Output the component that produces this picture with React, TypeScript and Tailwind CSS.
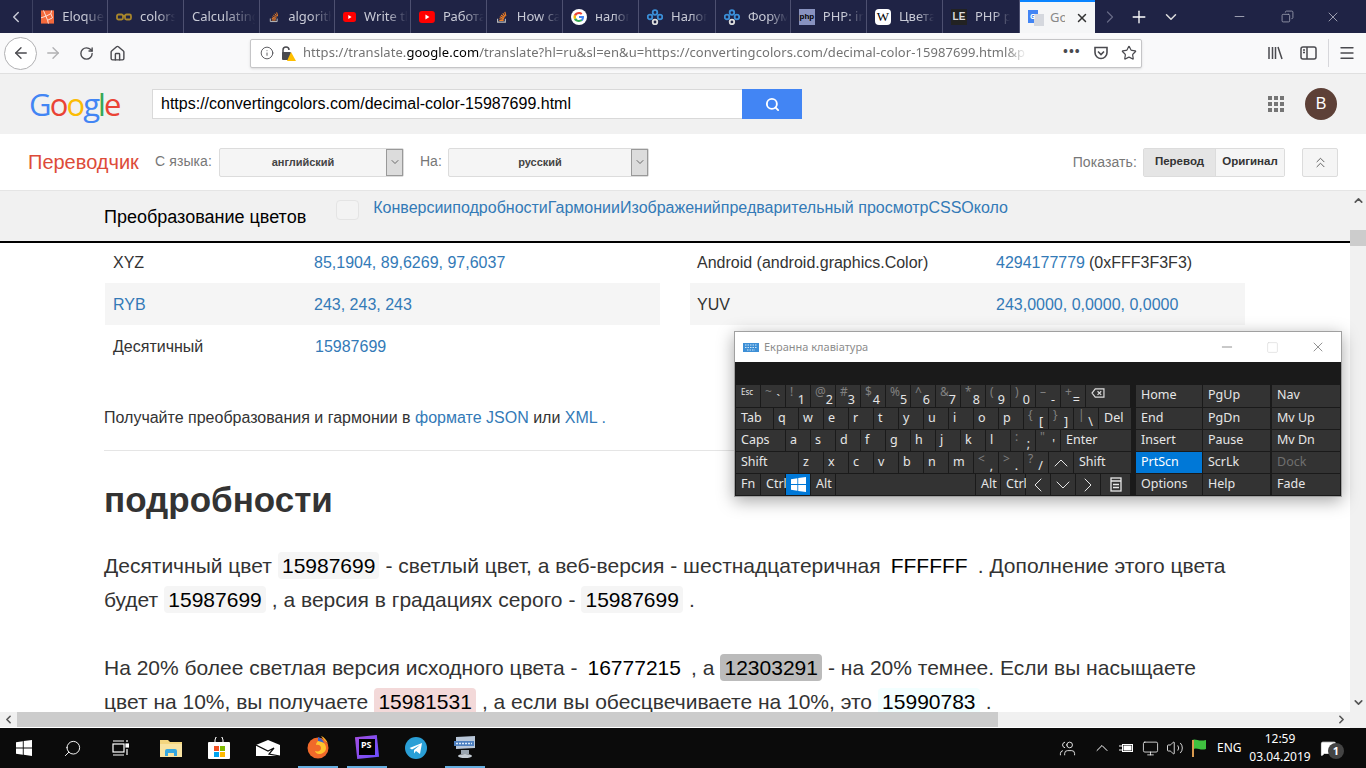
import { Home, RotateCw, ArrowLeft, ArrowRight, Info, Star, Search, X, Minus, Plus, ChevronLeft, ChevronRight, ChevronDown, ChevronUp, ChevronsUp, Square, Copy, Menu, Users, Volume2, Monitor, MessageSquare } from "lucide-react";

const sans = "font-['Liberation_Sans',Arial,sans-serif]";
const ui = "font-['Noto_Sans','Open_Sans',sans-serif]";

function SoIcon() {
  return (
    <svg width="16" height="16" viewBox="0 0 16 16" fill="none">
      <path d="M3 10v4h9v-4" stroke="#bbb" strokeWidth="1.3" />
      <path d="M5 12h5M5 10l5 .8M5.6 7.8l4.8 2M7 5.6l4 3M9 3.6l2.8 4M11.4 2l1.2 4.6" stroke="#f48024" strokeWidth="1.3" />
    </svg>
  );
}

function YtIcon() {
  return (
    <svg width="16" height="16" viewBox="0 0 16 16">
      <rect x="0" y="2" width="16" height="12" rx="3" fill="#f00" />
      <path d="M6.5 5.5v5l4-2.5z" fill="#fff" />
    </svg>
  );
}

function GoogleG({ size = 16 }: { size?: number }) {
  return (
    <svg width={size} height={size} viewBox="0 0 16 16">
      <circle cx="8" cy="8" r="8" fill="#fff" />
      <path d="M13 8.2c0-.4 0-.8-.1-1.100H8v2h2.800c-.1.700-.5 1.200-1 1.600l1.600 1.200c1-.9 1.600-2.200 1.600-3.700z" fill="#4285f4" />
      <path d="M8 13c1.400 0 2.500-.5 3.400-1.200l-1.600-1.200c-.5.300-1.100.5-1.800.5-1.300 0-2.500-.9-2.900-2.100L3 10.200C3.800 11.900 5.800 13 8 13z" fill="#34a853" />
      <path d="M5.100 9c-.2-.7-.2-1.300 0-2L3 5.800c-.7 1.400-.7 3 0 4.400z" fill="#fbbc05" />
      <path d="M8 5c.8 0 1.400.3 2 .8l1.400-1.400C10.500 3.500 9.400 3 8 3 5.800 3 3.800 4.100 3 5.800L5.100 7C5.500 5.900 6.700 5 8 5z" fill="#ea4335" />
    </svg>
  );
}

function NodesIcon() {
  return (
    <svg width="16" height="16" viewBox="0 0 16 16" fill="none" stroke="#3b8fd8" strokeWidth="1.800">
      <circle cx="8" cy="3.500" r="2.300" />
      <circle cx="3" cy="8" r="2.300" />
      <circle cx="13" cy="8" r="2.300" />
      <circle cx="8" cy="13" r="2.300" stroke="#ddd" />
    </svg>
  );
}

function Favicon({ kind }: { kind: string }) {
  if (kind === "so") return <SoIcon />;
  if (kind === "yt") return <YtIcon />;
  if (kind === "g") return <GoogleG />;
  if (kind === "nodes") return <NodesIcon />;
  if (kind === "eloquent")
    return (
      <svg width="16" height="16" viewBox="0 0 16 16">
        <rect width="16" height="16" fill="#f4693c" />
        <path d="M3 0l3 7-6 2M6 7l6-3 2 5-6 3zM12 4l1-4M8 12l1 4" stroke="#fde3d8" strokeWidth="1.200" fill="none" />
      </svg>
    );
  if (kind === "glasses")
    return (
      <svg width="16" height="16" viewBox="0 0 16 16" fill="none" stroke="#a8862c" strokeWidth="1.800">
        <rect x="1" y="5.500" width="6" height="5" rx="1.500" />
        <rect x="9" y="5.500" width="6" height="5" rx="1.500" />
        <path d="M7 7h2" />
      </svg>
    );
  if (kind === "php")
    return (
      <div className={`w-4 h-4 bg-[#8892bf] text-[8px] leading-4 text-center text-black font-bold ${sans}`}>php</div>
    );
  if (kind === "wiki")
    return <div className="w-4 h-4 rounded-sm bg-white text-[13px] leading-4 text-center text-black font-['Liberation_Serif',serif]">W</div>;
  if (kind === "lb")
    return <div className={`w-4 h-4 bg-[#222] text-[10px] leading-4 text-center text-[#ddd] font-bold ${sans}`}>LE</div>;
  return null;
}

const tabs = [
  { icon: "eloquent", label: "Eloquent", w: "w-[75px]" },
  { icon: "glasses", label: "colors", w: "w-[76px]" },
  { icon: "", label: "Calculating", w: "w-[76px]" },
  { icon: "so", label: "algorithm", w: "w-[75px]" },
  { icon: "yt", label: "Write the", w: "w-[76px]" },
  { icon: "yt", label: "Работа", w: "w-[76px]" },
  { icon: "so", label: "How can", w: "w-[76px]" },
  { icon: "g", label: "налог", w: "w-[76px]" },
  { icon: "nodes", label: "Налог", w: "w-[77px]" },
  { icon: "nodes", label: "Форум", w: "w-[75px]" },
  { icon: "php", label: "PHP: in", w: "w-[76px]" },
  { icon: "wiki", label: "Цвета", w: "w-[76px]" },
  { icon: "lb", label: "PHP p", w: "w-[77px]" },
];

function TabBar() {
  return (
    <div className={`h-[33px] shrink-0 bg-[#1f2345] flex items-stretch text-[13px] text-[#c8cad6] ${ui}`}>
      <div className="w-[33px] shrink-0 flex items-center justify-center border-r border-[#3d4161]">
        <ChevronLeft size={18} strokeWidth={2} className="text-[#c8cad6]" />
      </div>
      {tabs.map((t, i) => (
        <div key={i} className={`${t.w} shrink-0 flex items-center gap-[8px] pl-[8px] border-r border-[#4d5070] overflow-hidden`}>
          {t.icon && <Favicon kind={t.icon} />}
          <span className="whitespace-nowrap overflow-hidden [mask-image:linear-gradient(to_right,black_50%,transparent_95%)]">{t.label}</span>
        </div>
      ))}
      <div className="w-[75px] shrink-0 bg-[#f5f6f7] border-t-2 border-[#0a84ff] flex items-center pl-[8px] gap-[6px] text-[#888]">
        <svg width="16" height="16" viewBox="0 0 16 16">
          <rect x="0" y="0" width="10" height="13" fill="#4285f4" />
          <rect x="6" y="4" width="10" height="12" fill="#d5d8de" />
          <text x="2" y="9" fontSize="7" fill="#fff" fontWeight="bold">G</text>
        </svg>
        <span className="w-[15px] overflow-hidden">Go</span>
        <X size={14} strokeWidth={2.500} className="text-[#333] ml-[4px]" />
      </div>
      <div className="flex items-center text-white">
        <ChevronRight size={20} strokeWidth={1.500} className="ml-[5px] text-[#666a85]" />
        <Plus size={20} strokeWidth={1.600} className="ml-[9px]" />
        <ChevronDown size={18} strokeWidth={2} className="ml-[13px] text-[#ddd]" />
        <Minus size={15} strokeWidth={1.600} className="ml-[52px] text-[#9a9cae]" />
        <Copy size={13} strokeWidth={1.600} className="ml-[34px] text-[#9a9cae] -scale-x-100" />
        <X size={16} strokeWidth={1.500} className="ml-[31px] text-[#9a9cae]" />
      </div>
    </div>
  );
}

function NavBar() {
  return (
    <div className={`h-[40px] shrink-0 bg-[#f9f9fa] flex items-center text-[#4a4a4f] ${ui}`}>
      <div className="ml-[4px] w-[33px] h-[33px] rounded-full border border-[#b1b1b3] bg-white flex items-center justify-center">
        <ArrowLeft size={18} strokeWidth={1.800} />
      </div>
      <ArrowRight size={18} strokeWidth={1.800} className="ml-[7px] text-[#b1b1b3]" />
      <RotateCw size={15} strokeWidth={2.200} className="ml-[17px]" />
      <Home size={17} strokeWidth={2} className="ml-[15px]" />
      <div className="ml-[124px] w-[892px] h-[29px] bg-white border border-[#c5c5c7] rounded-[2px] flex items-center shadow-sm">
        <Info size={14} strokeWidth={1.500} className="ml-[9px] shrink-0" />
        <svg width="16" height="16" viewBox="0 0 16 16" className="ml-[6px] shrink-0">
          <path d="M3 8V5a3 3 0 0 1 6 0" fill="none" stroke="#4a4a4f" strokeWidth="1.500" />
          <rect x="2" y="7" width="9" height="8" rx="1" fill="#4a4a4f" />
          <path d="M11 7l5 9H7z" fill="#ffbf00" />
        </svg>
        <span className="ml-[7px] w-[724px] shrink-0 overflow-hidden whitespace-nowrap text-[13px] text-[#737373] tracking-[0.06px] [mask-image:linear-gradient(to_right,black_97%,transparent)]">
          https://translate.<span className="text-black">google.com</span>/translate?hl=ru&amp;sl=en&amp;u=https://convertingcolors.com/decimal-color-15987699.html&amp;p
        </span>
        <span className="ml-[36px] text-[13px] font-bold leading-none tracking-[1px] -mt-1">•••</span>
        <svg width="16" height="16" viewBox="0 0 16 16" fill="none" stroke="#4a4a4f" strokeWidth="1.600" className="ml-[12px]">
          <path d="M2 2.500h12v5a6 6 0 0 1-12 0z" />
          <path d="M5 6.500l3 3 3-3" />
        </svg>
        <Star size={16} strokeWidth={1.800} className="ml-[12px]" />
      </div>
      <div className="ml-auto flex items-center">
        <svg width="17" height="16" viewBox="0 0 17 16" fill="none" stroke="#4a4a4f" strokeWidth="1.500">
          <path d="M2 2v12M5.500 2v12M8.500 2v12M11 2l4 12" />
        </svg>
        <svg width="17" height="16" viewBox="0 0 17 16" fill="none" stroke="#4a4a4f" strokeWidth="1.500" className="ml-[16px]">
          <rect x="1" y="2" width="15" height="12" rx="2" />
          <path d="M7 2v12" />
          <path d="M3 5h2M3 7.500h2" />
        </svg>
        <div className="ml-[11px] h-[28px] border-l border-[#d7d7db]" />
        <Menu size={18} strokeWidth={1.800} className="ml-[9px] mr-[10px]" />
      </div>
    </div>
  );
}

function GoogleHeader() {
  return (
    <div className={`h-[61px] shrink-0 bg-[#f1f1f1] border-t border-[#e0e0e0] flex items-center ${sans}`}>
      <div className="ml-[29px] w-[123px] text-[31px] font-medium leading-none font-['Open_Sans',sans-serif] tracking-[-1.900px] mt-[1px]">
        <span className="text-[#4285f4]">G</span>
        <span className="text-[#ea4335]">o</span>
        <span className="text-[#fbbc05]">o</span>
        <span className="text-[#4285f4]">g</span>
        <span className="text-[#34a853]">l</span>
        <span className="text-[#ea4335]">e</span>
      </div>
      <div className="w-[590px] h-[30px] bg-white border border-[#d9d9d9] border-r-0 flex items-center pl-[8px] text-[16px] text-black">
        https://convertingcolors.com/decimal-color-15987699.html
      </div>
      <div className="w-[60px] h-[30px] bg-[#4285f4] flex items-center justify-center">
        <Search size={15} strokeWidth={3} className="text-white" />
      </div>
      <div className="ml-auto grid grid-cols-3 gap-[2px] mr-[21px]">
        {Array.from({ length: 9 }).map((_, i) => (
          <div key={i} className="w-[4px] h-[4px] bg-[#757575]" />
        ))}
      </div>
      <div className="w-[32px] h-[32px] mr-[29px] rounded-full bg-[#5d4037] text-white flex items-center justify-center text-[16px]">B</div>
    </div>
  );
}

function LangSelect({ label, w }: { label: string; w: string }) {
  return (
    <div className={`${w} h-[29px] bg-[#f5f5f5] border border-[#dcdcdc] rounded-[2px] flex items-center`}>
      <span className="flex-1 text-center text-[11px] font-bold text-[#444]">{label}</span>
      <div className="w-[17px] h-full bg-[#dcdcdc] border border-[#999] flex items-center justify-center">
        <ChevronDown size={12} strokeWidth={1.500} className="text-[#444]" />
      </div>
    </div>
  );
}

function TranslateBar() {
  return (
    <div className={`h-[57px] shrink-0 bg-white border-b border-[#e5e5e5] flex items-center ${sans}`}>
      <span className="ml-[28px] w-[111px] text-[20px] text-[#dd4b39]">Переводчик</span>
      <span className="ml-[16px] w-[58px] text-[14px] tracking-[0.1px] whitespace-nowrap text-[#777] mr-[6px] -mt-[1px]">С языка:</span>
      <LangSelect label="английский" w="w-[185px]" />
      <span className="ml-[16px] w-[21px] mr-[7px] text-[14px] text-[#777] -mt-[1px]">На:</span>
      <LangSelect label="русский" w="w-[201px]" />
      <span className="ml-auto text-[14px] tracking-[0.1px] text-[#777] mr-[6px]">Показать:</span>
      <div className="h-[29px] flex border border-[#dcdcdc] rounded-[2px] text-[11.500px] font-bold text-[#333]">
        <div className="w-[71px] bg-[#e5e5e5] flex items-center justify-center">Перевод</div>
        <div className="w-[69px] bg-[#f5f5f5] border-l border-[#dcdcdc] flex items-center justify-center">Оригинал</div>
      </div>
      <div className="ml-[17px] mr-[28px] w-[36px] h-[29px] bg-[#f5f5f5] border border-[#dcdcdc] rounded-[2px] flex items-center justify-center">
        <ChevronsUp size={17} strokeWidth={1.300} className="text-[#555]" />
      </div>
    </div>
  );
}

function StickyNav() {
  return (
    <div className={`relative z-10 h-[52px] shrink-0 bg-[#f1f1f1] border-b-2 border-black flex ${sans}`}>
      <span className="ml-[104px] mt-[16px] text-[18px] leading-5 text-black">Преобразование цветов</span>
      <div className="ml-[30px] mt-[9px] w-[23px] h-[20px] rounded-[4px] bg-[#f3f3f3] border border-[#e4e4e4]" />
      <span className="ml-[14px] mt-[7px] text-[16px] leading-5 text-[#337ab7]">КонверсииподробностиГармонииИзображенийпредварительный просмотрCSSОколо</span>
    </div>
  );
}

function Row({ label, value, extra, link, shade, labelW, pad = "pl-[8px]" }: { label: string; value: string; extra?: string; link?: boolean; shade?: boolean; labelW: string; pad?: string }) {
  return (
    <div className={`h-[42px] pt-[2px] flex items-center ${pad} ${shade ? "bg-[#f5f5f5]" : ""}`}>
      <span className={`${labelW} shrink-0 ${link ? "text-[#337ab7]" : "text-[#333]"}`}>{label}</span>
      <span className="text-[#337ab7]">{value}</span>
      {extra && <span className="ml-[4px] text-[#333]">{extra}</span>}
    </div>
  );
}

function Chip({ children, className = "bg-[#f5f5f5]" }: { children: string; className?: string }) {
  return <span className={`${className} text-black rounded-[4px] px-[4px] py-[2px] mx-[0.25px]`}>{children}</span>;
}

function Content() {
  return (
    <div className={`-mt-[2px] h-[471px] overflow-hidden pl-[104px] pr-[105px] ${sans}`}>
      <div className="ml-px grid grid-cols-[555px_555px] gap-x-[30px] text-[16px]">
        <div>
          <Row label="XYZ" value="85,1904, 89,6269, 97,6037" labelW="w-[201px]" />
          <Row label="RYB" value="243, 243, 243" link shade labelW="w-[201px]" />
          <Row label="Десятичный" value="15987699" labelW="w-[202px]" />
        </div>
        <div>
          <Row label="Android (android.graphics.Color)" value="4294177779" extra="(0xFFF3F3F3)" labelW="w-[299px]" pad="pl-[7px]" />
          <Row label="YUV" value="243,0000, 0,0000, 0,0000" shade labelW="w-[299px]" pad="pl-[7px]" />
        </div>
      </div>
      <p className="mt-[41px] text-[16px] leading-5 text-[#333]">
        Получайте преобразования и гармонии в <span className="text-[#337ab7]">формате JSON</span> или <span className="text-[#337ab7]">XML</span> <span className="text-[#337ab7]">.</span>
      </p>
      <div className="mt-[22px] border-t border-[#e5e5e5]" />
      <h2 className="mt-[29px] text-[35px] leading-10 font-bold text-[#333]">подробности</h2>
      <p className="mt-[29px] text-[21px] leading-[34px] text-[#333]">
        Десятичный цвет <Chip>15987699</Chip> - светлый цвет, а веб-версия - шестнадцатеричная <Chip className="bg-[#ffffff]">FFFFFF</Chip> . Дополнение этого цвета будет <Chip>15987699</Chip> , а версия в градациях серого - <Chip>15987699</Chip> .
      </p>
      <p className="mt-[34px] text-[21px] leading-[34px] text-[#333]">
        На 20% более светлая версия исходного цвета - <Chip className="bg-[#ffffff]">16777215</Chip> , а <Chip className="bg-[#bbbbbb]">12303291</Chip> - на 20% темнее. Если вы насыщаете цвет на 10%, вы получаете <Chip className="bg-[#f3d9d9]">15981531</Chip> , а если вы обесцвечиваете на 10%, это <Chip className="bg-[#f3ffff]">15990783</Chip> .
      </p>
    </div>
  );
}

type K = { t?: string; top?: string; w: string; bg?: string; small?: boolean; icon?: string };

const w24 = "w-[24px]";
const rows: K[][] = [
  [
    { t: "Esc", w: w24, small: true },
    { top: "~", t: "`", w: w24 },
    { top: "!", t: "1", w: w24 }, { top: "@", t: "2", w: w24 }, { top: "#", t: "3", w: w24 }, { top: "$", t: "4", w: w24 },
    { top: "%", t: "5", w: w24 }, { top: "^", t: "6", w: w24 }, { top: "&", t: "7", w: w24 }, { top: "*", t: "8", w: w24 },
    { top: "(", t: "9", w: w24 }, { top: ")", t: "0", w: w24 }, { top: "–", t: "-", w: w24 }, { top: "+", t: "=", w: w24 },
    { icon: "back", w: "w-[44px]" },
  ],
  [
    { t: "Tab", w: "w-[37px]" },
    ..."qwertyuiop".split("").map((c) => ({ t: c, w: w24 })),
    { top: "{", t: "[", w: w24 }, { top: "}", t: "]", w: w24 }, { top: "|", t: "\\", w: w24 },
    { t: "Del", w: "w-[32px]" },
  ],
  [
    { t: "Caps", w: "w-[49px]" },
    ..."asdfghjkl".split("").map((c) => ({ t: c, w: w24 })),
    { top: ":", t: ";", w: w24 }, { top: '"', t: "'", w: w24 },
    { t: "Enter", w: "w-[70px]" },
  ],
  [
    { t: "Shift", w: "w-[62px]" },
    ..."zxcvbnm".split("").map((c) => ({ t: c, w: w24 })),
    { top: "<", t: ",", w: w24 }, { top: ">", t: ".", w: w24 }, { top: "?", t: "/", w: w24 },
    { icon: "up", w: w24 },
    { t: "Shift", w: "w-[57px]" },
  ],
  [
    { t: "Fn", w: w24 }, { t: "Ctrl", w: w24 },
    { icon: "win", w: w24, bg: "bg-[#0078d7]" },
    { t: "Alt", w: w24 },
    { w: "w-[139px]" },
    { t: "Alt", w: w24 }, { t: "Ctrl", w: w24 },
    { icon: "left", w: w24 }, { icon: "down", w: w24 }, { icon: "right", w: w24 },
    { icon: "menu", w: "w-[29px]" },
  ],
];

const navRows = [
  ["Home", "PgUp", "Nav"],
  ["End", "PgDn", "Mv Up"],
  ["Insert", "Pause", "Mv Dn"],
  ["PrtScn", "ScrLk", "Dock"],
  ["Options", "Help", "Fade"],
];

function WinLogo({ size = 14, color = "#fff" }: { size?: number; color?: string }) {
  return (
    <svg width={size} height={size} viewBox="0 0 16 16" fill={color}>
      <path d="M0 2.300l6.800-1v6.200H0zM7.700 1.100L16 0v7.500H7.700zM0 8.400h6.800v6.300L0 13.700zM7.700 8.400H16V16l-8.300-1.200z" />
    </svg>
  );
}

function KeyIcon({ name }: { name: string }) {
  if (name === "win") return <WinLogo size={15} />;
  if (name === "up") return <ChevronUp size={24} strokeWidth={1} />;
  if (name === "down") return <ChevronDown size={24} strokeWidth={1} />;
  if (name === "left") return <ChevronLeft size={24} strokeWidth={1} />;
  if (name === "right") return <ChevronRight size={24} strokeWidth={1} />;
  if (name === "back")
    return (
      <svg width="14" height="11" viewBox="0 0 15 12" fill="none" stroke="#ddd" strokeWidth="1.300">
        <path d="M4.500 1H14v9H4.500L1 5.500z" />
        <path d="M7 3.500l4 4M11 3.500l-4 4" />
      </svg>
    );
  return (
    <svg width="12" height="15" viewBox="0 0 12 15" fill="none" stroke="#e8e8e8" strokeWidth="1.300">
      <rect x="1" y="1" width="10" height="13" />
      <path d="M1 4h10M3 7.500h6M3 10.500h6" />
    </svg>
  );
}

function Key({ k }: { k: K }) {
  const base = `${k.w} h-full shrink-0 ${k.bg ?? "bg-[#333333]"} text-[#e6e6e6]`;
  if (k.icon === "back") return <div className={`${base} pl-[5px] pt-[3px]`}><KeyIcon name="back" /></div>;
  if (k.icon) return <div className={`${base} flex items-center justify-center`}><KeyIcon name={k.icon} /></div>;
  if (k.top)
    return (
      <div className={`${base} flex justify-between pl-[4px] pr-[5px]`}>
        <span className="text-[12px] leading-[14px] text-[#808080]">{k.top}</span>
        <span className="text-[12.500px] leading-[15px] self-end">{k.t}</span>
      </div>
    );
  if (k.small) return <div className={`${base} text-[8px] leading-[14px] pl-[5px] text-[#ccc]`}>{k.t}</div>;
  const single = k.t && k.t.length === 1;
  return (
    <div className={`${base} flex items-center text-[12.500px] pb-[1px] ${single ? "pl-[4px]" : "pl-[5px]"}`}>
      {k.t}
    </div>
  );
}

function Keyboard() {
  return (
    <div className={`absolute left-[734px] top-[331px] w-[608px] h-[166px] bg-[#1a1a1a] border border-[#a0a0a0] shadow-[0_4px_16px_rgba(0,0,0,0.35)] flex flex-col ${ui}`}>
      <div className="h-[30px] bg-white shrink-0 flex items-center">
        <svg width="16" height="9" viewBox="0 0 16 9" className="ml-[8px]">
          <rect width="16" height="9" fill="#3d8fd6" />
          <path d="M2 2h12M2 4.500h12M4 7h8" stroke="#cfe6f8" strokeWidth="1" strokeDasharray="1.500 1" />
        </svg>
        <span className="ml-[5px] text-[11px] text-[#8c8c8c]">Екранна клавіатура</span>
        <Minus size={16} strokeWidth={1.200} className="ml-auto text-[#777]" />
        <Square size={13} strokeWidth={1.200} className="ml-[31px] text-[#d8d8d8]" />
        <X size={16} strokeWidth={1.200} className="ml-[31px] mr-[15px] text-[#777]" />
      </div>
      <div className="mt-[23px] ml-[1px] flex">
        <div className="w-[394px] flex flex-col gap-px">
          {rows.map((r, i) => (
            <div key={i} className={`flex gap-px ${i === 0 ? "h-[22px]" : "h-[21px]"}`}>
              {r.map((k, j) => <Key key={j} k={k} />)}
            </div>
          ))}
        </div>
        <div className="ml-[6px] flex flex-col gap-px">
          {navRows.map((r, i) => (
            <div key={r[0]} className={`flex text-[12.500px] text-[#e6e6e6] ${i === 0 ? "h-[22px]" : "h-[21px]"}`}>
              <div className={`w-[66px] pl-[5px] pb-[1px] flex items-center ${r[0] === "PrtScn" ? "bg-[#0078d7] text-white" : "bg-[#333333]"}`}>{r[0]}</div>
              <div className="ml-px w-[67px] pl-[5px] pb-[1px] flex items-center bg-[#333333]">{r[1]}</div>
              <div className={`ml-[2px] w-[68px] pl-[5px] pb-[1px] flex items-center bg-[#333333] ${r[2] === "Dock" ? "text-[#6f6f6f]" : ""}`}>{r[2]}</div>
            </div>
          ))}
        </div>
      </div>
    </div>
  );
}

function Taskbar() {
  return (
    <div className={`h-[40px] shrink-0 bg-[#0b0b0b] flex items-center text-white ${ui}`}>
      <div className="w-[48px] flex justify-center"><WinLogo size={16} /></div>
      <div className="w-[48px] flex justify-center"><Search size={19} strokeWidth={1.200} className="-scale-x-100" /></div>
      <div className="w-[48px] flex justify-center">
        <svg width="17" height="16" viewBox="0 0 17 16" fill="none" stroke="#fff" strokeWidth="1.200">
          <path d="M1 1h11M1 15h11" />
          <rect x="1" y="4" width="11" height="8" />
          <rect x="14" y="4" width="2.500" height="3" fill="#fff" />
          <path d="M15 9v6M15 0v2" />
        </svg>
      </div>
      <div className="ml-[2px] w-[49px] flex justify-center">
        <svg width="22" height="18" viewBox="0 0 22 18">
          <path d="M0 1h8l2 2h12v15H0z" fill="#f3d57f" />
          <rect x="0" y="5" width="22" height="13" fill="#f8e3a2" />
          <path d="M5 17v-5a2 2 0 0 1 2-2h8a2 2 0 0 1 2 2v5h-3v-3H8v3z" fill="#35a7e0" />
        </svg>
      </div>
      <div className="w-[48px] flex justify-center">
        <svg width="22" height="22" viewBox="0 0 22 22">
          <path d="M7 5V3a4 4 0 0 1 8 0v2" fill="none" stroke="#fff" strokeWidth="1" />
          <rect y="5" width="22" height="17" rx="1" fill="#fff" />
          <rect x="6" y="9" width="5" height="5" fill="#f25022" />
          <rect x="12" y="9" width="5" height="5" fill="#7fba00" />
          <rect x="6" y="15" width="5" height="5" fill="#00a4ef" />
          <rect x="12" y="15" width="5" height="5" fill="#ffb900" />
        </svg>
      </div>
      <div className="w-[50px] flex justify-center">
        <svg width="24" height="16" viewBox="0 0 24 16">
          <path d="M0 5L12 0l12 5v11H0z" fill="#fff" />
          <path d="M0 5l12 6 6-3-5 6 11 2" fill="none" stroke="#0b0b0b" strokeWidth="1.200" />
        </svg>
      </div>
      <div className="w-[49px] h-full flex justify-center">
        <div className="w-[40px] h-full flex items-center justify-center border-b-2 border-[#66aee0]">
          <svg width="24" height="24" viewBox="0 0 24 24">
            <circle cx="12" cy="13" r="10.500" fill="#f0692a" />
            <path d="M12 6c5 0 8 3 8 7s-4 6-7 6c-2 0-4-2-4-3 3 1 6 0 6-3s-3-4-5-3c0-2 1-3 2-4z" fill="#ffc42e" />
            <path d="M12 2c3 1 5 3 6 6-2-1-4-2-6-2z" fill="#3a63c8" />
            <path d="M15 1c3 1 6 4 7 8-1-2-3-3-4-4z" fill="#ffb12a" />
          </svg>
        </div>
      </div>
      <div className="w-[49px] h-full flex justify-center">
        <div className="w-[40px] h-full flex items-center justify-center border-b-2 border-[#66aee0]">
          <div className="w-[22px] h-[22px] rotate-[-6deg] bg-gradient-to-br from-[#a24de0] to-[#6a4dff] flex items-center justify-center">
            <div className="w-[16px] h-[16px] bg-black text-[9px] leading-[12px] font-bold pl-[2px] rotate-[6deg]">PS</div>
          </div>
        </div>
      </div>
      <div className="w-[49px] flex justify-center">
        <svg width="22" height="22" viewBox="0 0 22 22">
          <circle cx="11" cy="11" r="11" fill="#2a9fd6" />
          <path d="M4.500 11L17 6l-2 11-4-3-2 2.500V13l6-5-8 4.500z" fill="#fff" />
        </svg>
      </div>
      <div className="w-[49px] h-full flex justify-center">
        <div className="w-[40px] h-full flex items-center justify-center border-b-2 border-[#66aee0]">
          <svg width="24" height="24" viewBox="0 0 24 24">
            <path d="M3 2l19-1v12L3 14z" fill="#b8c6d8" />
            <rect x="1" y="6" width="20" height="5" fill="#4d7fbf" />
            <path d="M3 8.500h16" stroke="#d7e8fa" strokeWidth="1.500" strokeDasharray="2 1" />
            <path d="M8 15h8v4H8z" fill="#9aa5b0" />
            <ellipse cx="12" cy="21" rx="7" ry="2" fill="#c5cdd5" />
          </svg>
        </div>
      </div>
      <div className="ml-auto flex items-center">
        <Users size={17} strokeWidth={1.200} className="-scale-x-100" />
        <ChevronUp size={20} strokeWidth={1.200} className="ml-[16px]" />
        <svg width="16" height="12" viewBox="0 0 16 12" fill="none" stroke="#fff" className="ml-[6px]">
          <rect x="4.500" y="2.500" width="10" height="7" />
          <rect x="6" y="4" width="7" height="4" fill="#fff" />
          <path d="M1 4h3M1 8h3" />
        </svg>
        <Monitor size={17} strokeWidth={1.100} className="ml-[8px]" />
        <Volume2 size={18} strokeWidth={1.100} className="ml-[7px]" />
        <svg width="16" height="18" viewBox="0 0 16 18" className="ml-[7px]">
          <path d="M1 1c4-2 6 2 14 0v9c-6 2-8-2-13 0z" fill="#3fc13f" />
          <rect x="1" y="1" width="2" height="17" fill="#d99a4e" />
        </svg>
        <span className="ml-[10px] w-[24px] text-[12px]">ENG</span>
        <div className="ml-[7px] w-[64px] text-[12px] leading-[18px] text-center">
          <div>12:59</div>
          <div>03.04.2019</div>
        </div>
        <div className="ml-[8px] mr-[22px] w-[24px] h-[24px] flex items-center">
          <MessageSquare size={17} fill="#fff" strokeWidth={1} />
          <div className="-ml-[9px] mt-[6px] w-[16px] h-[16px] shrink-0 rounded-full bg-[#444] text-[11px] leading-4 text-center font-bold">1</div>
        </div>
      </div>
    </div>
  );
}

function Page() {
  return (
    <div className="flex flex-1 min-h-0">
      <div className="w-[1350px] shrink-0 flex flex-col">
        <StickyNav />
        <Content />
        <div className="h-[15px] bg-[#f0f0f0] flex items-center">
          <div className="w-[17px] flex justify-center"><ChevronLeft size={13} strokeWidth={3} className="text-[#555]" /></div>
          <div className="w-[981px] h-full bg-[#cccccc]" />
          <ChevronRight size={13} strokeWidth={3} className="ml-auto mr-[2px] text-[#555]" />
        </div>
      </div>
      <div className="flex-1 bg-[#f1f1f1] flex flex-col items-center">
        <ChevronUp size={13} strokeWidth={3} className="mt-[3px] text-[#555]" />
        <div className="mt-[23px] w-full h-[16px] bg-[#cccccc]" />
        <ChevronDown size={13} strokeWidth={3} className="mt-[450px] text-[#555]" />
      </div>
    </div>
  );
}

export default function App() {
  return (
    <div className="relative w-[1366px] h-[768px] overflow-hidden bg-white flex flex-col">
      <TabBar />
      <NavBar />
      <GoogleHeader />
      <TranslateBar />
      <Page />
      <Taskbar />
      <Keyboard />
    </div>
  );
}
